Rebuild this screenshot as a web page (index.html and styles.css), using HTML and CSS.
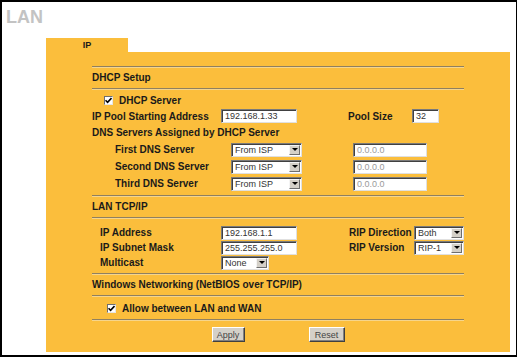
FILE: index.html
```html
<!DOCTYPE html>
<html lang="en">
<head>
    <meta charset="UTF-8">
    <title>LAN</title>
    <link rel="stylesheet" href="styles.css">
</head>
<body>
    <div class="frame">
        <h1 class="title">LAN</h1>

        <div class="tabs">
            <div class="tab">IP</div>
        </div>

        <div class="panel">
            <div class="sep"></div>
            <div class="head">DHCP Setup</div>
            <div class="sep"></div>

            <div class="group group-dhcp">
                <div class="row row-16 row-check">
                    <span class="checkbox"><svg width="7" height="7" viewBox="0 0 7 7"><path d="M0.5 3.2 L2.6 5.4 L6.5 1" fill="none" stroke="#000" stroke-width="1.6"/></svg></span>
                    <span class="label">DHCP Server</span>
                </div>
                <div class="row row-16">
                    <span class="label w-pool">IP Pool Starting Address</span>
                    <span class="input w-ip">192.168.1.33</span>
                    <span class="label w-size ml-right">Pool Size</span>
                    <span class="input w-num">32</span>
                </div>
                <div class="row row-17">
                    <span class="label">DNS Servers Assigned by DHCP Server</span>
                </div>
                <div class="row row-17 row-dns">
                    <span class="label w-dns">First DNS Server</span>
                    <span class="select w-isp"><span class="opt">From ISP</span><span class="arrow"></span></span>
                    <span class="input input-off w-dnsip ml-right">0.0.0.0</span>
                </div>
                <div class="row row-17 row-dns">
                    <span class="label w-dns">Second DNS Server</span>
                    <span class="select w-isp"><span class="opt">From ISP</span><span class="arrow"></span></span>
                    <span class="input input-off w-dnsip ml-right">0.0.0.0</span>
                </div>
                <div class="row row-17 row-dns">
                    <span class="label w-dns">Third DNS Server</span>
                    <span class="select w-isp"><span class="opt">From ISP</span><span class="arrow"></span></span>
                    <span class="input input-off w-dnsip ml-right">0.0.0.0</span>
                </div>
            </div>

            <div class="sep"></div>
            <div class="head">LAN TCP/IP</div>
            <div class="sep"></div>

            <div class="group group-lan">
                <div class="row row-15 row-lan">
                    <span class="label w-lan">IP Address</span>
                    <span class="input w-ip">192.168.1.1</span>
                    <span class="label w-rip ml-rip">RIP Direction</span>
                    <span class="select w-rip-sel"><span class="opt">Both</span><span class="arrow"></span></span>
                </div>
                <div class="row row-15 row-lan">
                    <span class="label w-lan">IP Subnet Mask</span>
                    <span class="input w-ip">255.255.255.0</span>
                    <span class="label w-rip ml-rip">RIP Version</span>
                    <span class="select w-rip-sel"><span class="opt">RIP-1</span><span class="arrow"></span></span>
                </div>
                <div class="row row-15 row-lan">
                    <span class="label w-lan">Multicast</span>
                    <span class="select w-multi"><span class="opt">None</span><span class="arrow"></span></span>
                </div>
            </div>

            <div class="sep"></div>
            <div class="head">Windows Networking (NetBIOS over TCP/IP)</div>
            <div class="sep"></div>

            <div class="group group-win">
                <div class="row row-15 row-allow">
                    <span class="checkbox"><svg width="7" height="7" viewBox="0 0 7 7"><path d="M0.5 3.2 L2.6 5.4 L6.5 1" fill="none" stroke="#000" stroke-width="1.6"/></svg></span>
                    <span class="label">Allow between LAN and WAN</span>
                </div>
            </div>

            <div class="sep"></div>

            <div class="buttons">
                <button class="btn btn-apply">Apply</button>
                <button class="btn btn-reset">Reset</button>
            </div>
        </div>
    </div>
</body>
</html>
```

FILE: styles.css
```css
* {
    margin: 0;
    padding: 0;
    box-sizing: border-box;
}

body {
    font-family: "Liberation Sans", Arial, sans-serif;
    background: #fff;
}

.frame {
    width: 517px;
    height: 357px;
    border: 2px solid #000;
    border-right-width: 1px;
    background: #fff;
}

.title {
    font-size: 18px;
    line-height: 18px;
    font-weight: bold;
    color: #c3c3c3;
    padding: 6px 0 0 4px;
    height: 36px;
}

.tabs {
    display: flex;
    padding-left: 44px;
}

.tab {
    width: 82px;
    height: 14px;
    background: #fbbe3c;
    font-size: 9px;
    font-weight: bold;
    line-height: 14px;
    text-align: center;
    color: #1a1a1a;
}

.panel {
    margin-left: 44px;
    width: 464px;
    height: 300px;
    background: #fbbe3c;
    padding: 14px 46px 10px;
}

.sep {
    height: 2px;
    border-top: 1px solid #8f8060;
    border-bottom: 1px solid #f6d58c;
}

.head {
    height: 20px;
    line-height: 20px;
    font-size: 10px;
    font-weight: bold;
    color: #1a1a1a;
}

.group-dhcp {
    padding: 2px 0 3px;
}

.group-lan {
    padding: 6px 0 3px;
}

.group-win {
    padding: 4px 0 3px;
}

.row {
    display: flex;
    align-items: center;
}

.row-15 { height: 15px; }
.row-16 { height: 16px; }
.row-17 { height: 17px; }

.row-check {
    padding-left: 12px;
}

.row-dns {
    padding-left: 23px;
}

.row-lan {
    padding-left: 8px;
}

.row-allow {
    padding-left: 15px;
}

.label {
    font-size: 10px;
    font-weight: bold;
    color: #1a1a1a;
    white-space: nowrap;
}

.checkbox {
    width: 9px;
    height: 9px;
    background: #fff;
    border: 1px solid;
    border-color: #6e6e6e #e6e6e6 #e6e6e6 #6e6e6e;
    display: flex;
    align-items: center;
    justify-content: center;
    margin-right: 6px;
}

.input,
.select {
    height: 14px;
    background: #fff;
    border: 1px solid;
    border-color: #7a7a7a #e0e0e0 #e0e0e0 #7a7a7a;
    box-shadow: inset 1px 1px #404040;
    font-size: 9px;
    line-height: 12px;
    color: #333;
    padding-left: 3px;
    white-space: nowrap;
    overflow: hidden;
}

.input-off {
    color: #9a9a9a;
}

.select {
    display: flex;
    justify-content: space-between;
    padding-right: 1px;
}

.select .opt {
    line-height: 12px;
}

.arrow {
    width: 11px;
    height: 10px;
    margin-top: 1px;
    background: #d4d0c8;
    border: 1px solid;
    border-color: #f4f4f4 #6e6e6e #6e6e6e #f4f4f4;
    display: flex;
    align-items: center;
    justify-content: center;
}

.arrow::after {
    content: "";
    border-left: 3px solid transparent;
    border-right: 3px solid transparent;
    border-top: 3px solid #000;
}

.w-pool { width: 129px; }
.w-ip { width: 76px; }
.w-size { width: 64px; }
.w-num { width: 27px; }
.w-dns { width: 116px; }
.w-isp { width: 71px; }
.w-dnsip { width: 74px; }
.w-lan { width: 121px; }
.w-rip { width: 65px; }
.w-rip-sel { width: 50px; }
.w-multi { width: 48px; }

.ml-right { margin-left: 51px; }
.ml-rip { margin-left: 52px; }

.buttons {
    display: flex;
    justify-content: center;
    gap: 64px;
    margin-top: 6px;
}

.btn {
    height: 15px;
    background: #d4d0c8;
    border: 1px solid;
    border-color: #fff #404040 #404040 #fff;
    box-shadow: inset -1px -1px #808080;
    font-family: inherit;
    font-size: 9px;
    color: #444;
    line-height: 12px;
}

.btn-apply { width: 33px; }
.btn-reset { width: 36px; }
```
